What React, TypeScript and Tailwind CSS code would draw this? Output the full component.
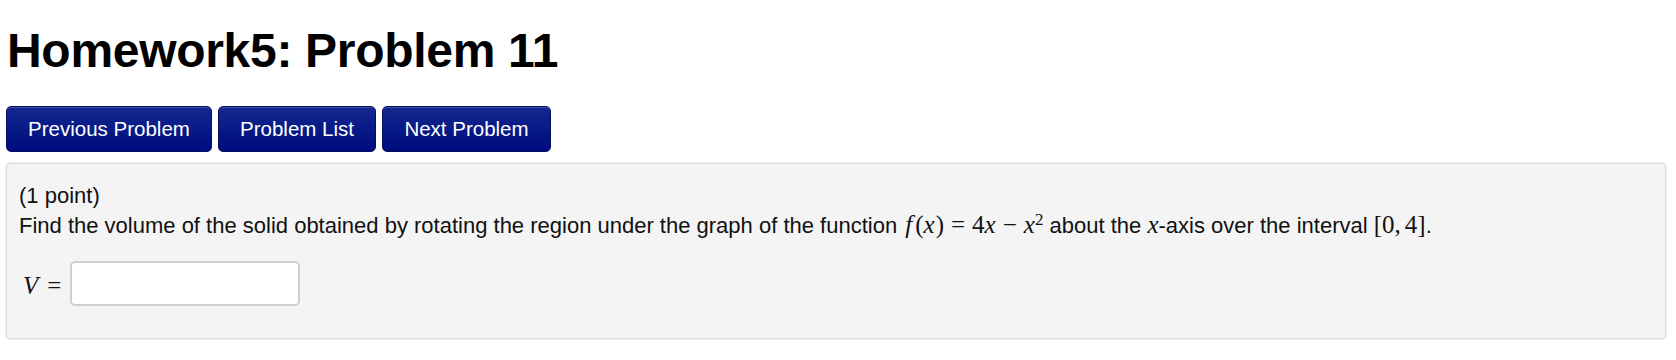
const navButtons = ["Previous Problem", "Problem List", "Next Problem"];

const NavButton = (props: { label: string; width: string }) => {
	return (
		<button
			className={`flex h-[46px] ${props.width} items-center justify-center rounded-[5px] border border-[#07105e] bg-linear-to-b from-[#14268f] to-[#000a7e] text-[20.5px] text-white shadow-[inset_0_1px_0_rgba(255,255,255,0.18)]`}
		>
			{props.label}
		</button>
	);
};

const MathVar = (props: { children: React.ReactNode; className?: string }) => {
	return (
		<span className={`font-['Liberation_Serif',serif] text-[25px] italic ${props.className ?? ""}`}>{props.children}</span>
	);
};

const MathText = (props: { children: React.ReactNode; className?: string }) => {
	return <span className={`font-['Liberation_Serif',serif] text-[25px] ${props.className ?? ""}`}>{props.children}</span>;
};

export default function App() {
	const widths = ["w-[206px]", "w-[158px]", "w-[169px]"];

	return (
		<div className="min-h-[360px] bg-white px-[6px] font-['Liberation_Sans',Arial,sans-serif] text-[#111]">
			<h1 className="pt-[23px] pl-[1px] text-[48px] font-bold leading-[56px] tracking-[-0.3px] text-black">
				Homework5: Problem 11
			</h1>

			<div className="mt-[27px] flex gap-[6px]">
				{navButtons.map((label, index) => (
					<NavButton key={label} label={label} width={widths[index] ?? "w-[160px]"} />
				))}
			</div>

			<div className="mt-[11px] h-[176px] w-[1660px] rounded-[4px] border border-[#dedede] bg-[#f4f4f4] px-[12px] pt-[17px] shadow-[0_0_0_1px_#ececec]">
				<div className="text-[22px] leading-[29px]">(1 point)</div>
				<div className="text-[22px] leading-[29px]">
					Find the volume of the solid obtained by rotating the region under the graph of the function{" "}
					<MathVar className="pl-[2px] pr-[3px]">f</MathVar>
					<MathText>(</MathText>
					<MathVar className="pr-[1px]">x</MathVar>
					<MathText>)</MathText>
					<MathText className="mx-[7px]">=</MathText>
					<MathText>4</MathText>
					<MathVar>x</MathVar>
					<MathText className="mx-[7px]">−</MathText>
					<MathVar>x</MathVar>
					<sup className="font-['Liberation_Serif',serif] text-[17px]">2</sup> about the <MathVar>x</MathVar>-axis
					over the interval <MathText>[0,</MathText>
					<MathText className="ml-[4px]">4]</MathText>.
				</div>

				<div className="mt-[21px] flex items-center">
					<span className="mt-[5px] ml-[4px] font-['Liberation_Serif',serif] text-[25px] italic">V</span>
					<span className="mt-[5px] ml-[9px] font-['Liberation_Serif',serif] text-[25px]">=</span>
					<input
						className="ml-[9px] h-[45px] w-[230px] rounded-[5px] border-2 border-[#cfcfcf] bg-white"
						type="text"
					/>
				</div>
			</div>
		</div>
	);
}
